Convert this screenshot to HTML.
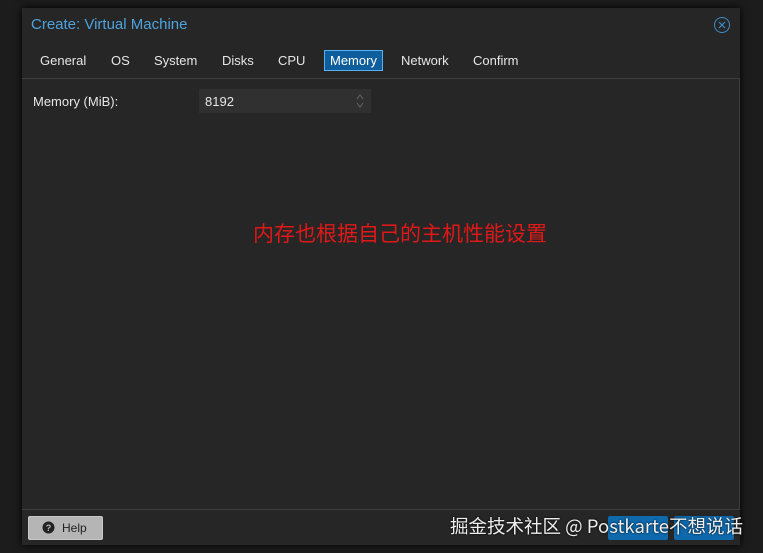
<!DOCTYPE html>
<html><head><style>
body{margin:0;width:763px;height:553px;background:#1c1c1c;font-family:"Liberation Sans",Arial,sans-serif;position:relative;overflow:hidden}
.dlg{position:absolute;left:22px;top:8px;width:718px;height:537px;background:#262626;box-shadow:0 0 8px #000}
.title{position:absolute;left:9px;top:8px;color:#4ea3dd;font-size:15px}
.close{position:absolute;left:692px;top:9px;width:14px;height:14px;border:1px solid #3a8fc9;border-radius:50%}
.tab{position:absolute;top:45px;color:#e6e6e6;font-size:13px}
.body{position:absolute;left:0;top:70px;width:717px;height:430px;background:#262626;border-top:1px solid #3d3d3d;border-bottom:1px solid #3d3d3d;border-right:1px solid #3d3d3d}
.lbl{position:absolute;left:11px;top:15px;color:#e6e6e6;font-size:13px}
.inp{position:absolute;left:177px;top:10px;width:172px;height:24px;background:#303030}
.inp span{position:absolute;left:6px;top:5px;color:#e6e6e6;font-size:13px}
.red{position:absolute;left:231px;top:139px;color:#e01818;font-size:21px;font-family:"Noto Sans CJK SC",sans-serif;letter-spacing:0}
.help{position:absolute;left:6px;top:508px;width:73px;height:22px;background:#b5b5b5;border:1px solid #c8c8c8;border-radius:2px;font-size:12px;color:#222}
.btn{position:absolute;top:508px;height:24px;background:#0e69ad;border-radius:2px}
.wm{position:absolute;left:450px;top:513px;color:#eee;font-size:18.5px;font-family:"Noto Sans CJK SC",sans-serif;text-shadow:0 0 2px #000}
</style></head><body>
<div class="dlg">
<div class="title">Create: Virtual Machine</div>
<div class="close"><svg width="14" height="14" style="position:absolute;left:0;top:0"><path d="M4 4L10 10M10 4L4 10" stroke="#3a8fc9" stroke-width="1.2"/></svg></div>
<span class="tab" style="left:18px">General</span>
<span class="tab" style="left:89px">OS</span>
<span class="tab" style="left:132px">System</span>
<span class="tab" style="left:200px">Disks</span>
<span class="tab" style="left:256px">CPU</span>
<div style="position:absolute;left:302px;top:42px;width:57px;height:19px;background:#0e5e9d;border:1px solid #5ab0ef"></div>
<span class="tab" style="left:308px;color:#fff">Memory</span>
<span class="tab" style="left:379px">Network</span>
<span class="tab" style="left:451px">Confirm</span>
<div class="body">
<div class="lbl">Memory (MiB):</div>
<div class="inp"><span>8192</span><svg width="10" height="16" style="position:absolute;right:6px;top:4px"><path d="M2 6L5 2L8 6M2 10L5 14L8 10" stroke="#666" fill="none"/></svg></div>
<div class="red">内存也根据自己的主机性能设置</div>
</div>
<div class="help"><svg width="13" height="13" style="position:absolute;left:13px;top:4px"><circle cx="6.5" cy="6.5" r="6" fill="#222"/><text x="6.5" y="10" font-size="9" fill="#bbb" text-anchor="middle" font-weight="bold" font-family="Liberation Sans">?</text></svg><span style="position:absolute;left:33px;top:4px">Help</span></div>
<div class="btn" style="left:586px;width:60px"></div>
<div class="btn" style="left:652px;width:60px"></div>
</div>
<div class="wm">掘金技术社区 @ Postkarte不想说话</div>
</body></html>
